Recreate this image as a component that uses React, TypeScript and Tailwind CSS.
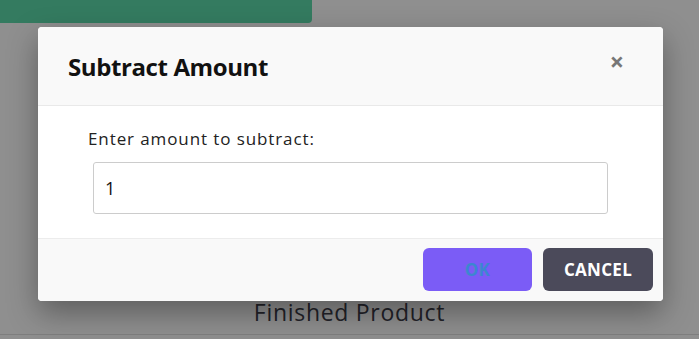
export default function App() {
  return (
    <div className="relative w-[699px] h-[339px] overflow-hidden bg-white font-['Open_Sans','Liberation_Sans',sans-serif]">
      {/* page behind the dialog */}
      <div className="flex flex-col h-full">
        <div className="w-[312px] h-[23px] bg-[#5ddcab] rounded-br-[4px]"></div>
        <div className="flex-1"></div>
        <div className="text-center text-[23px] leading-[28px] tracking-[0.7px] text-[#3d3d4a] pb-[8px]">Finished Product</div>
        <div className="h-[1px] bg-[#e0e0e0] mb-[4px]"></div>
      </div>

      {/* overlay */}
      <div className="absolute inset-0 bg-[rgba(0,0,0,0.44)]"></div>

      {/* dialog */}
      <div className="absolute left-[38px] top-[27px] w-[625px] rounded-[4px] overflow-hidden bg-white shadow-[0_12px_30px_rgba(0,0,0,0.35)]">
        <div className="h-[79px] bg-[#f9f9f9] border-b border-[#e9e9e9] flex items-center justify-between pl-[30px] pr-[39px]">
          <h2 className="text-[24px] font-bold tracking-[-0.4px] text-[#111] pt-[1px]">Subtract Amount</h2>
          <button className="text-[#777] text-[25px] font-bold leading-none pb-[9px]">×</button>
        </div>
        <div className="h-[133px] border-b border-[#ececec] pl-[50px] pr-[55px] pt-[21px]">
          <label className="block text-[17px] leading-[24px] tracking-[0.9px] text-[#222] mb-[11px]">Enter amount to subtract:</label>
          <input
            defaultValue="1"
            className="block ml-[5px] w-[515px] h-[52px] border border-[#cccccc] rounded-[3px] px-[11px] text-[18px] text-[#111] outline-none"
          />
        </div>
        <div className="h-[62px] bg-[#f9f9f9] flex items-center justify-end gap-[11px] pr-[10px] pb-[1px]">
          <button className="w-[109px] h-[43px] rounded-[6px] bg-[#7b5cf6] text-[#3d86cf] text-[17px] font-bold tracking-[0.3px]">OK</button>
          <button className="w-[110px] h-[43px] rounded-[6px] bg-[#4b4a5a] text-white text-[17px] font-bold tracking-[0.3px]">CANCEL</button>
        </div>
      </div>
    </div>
  );
}
